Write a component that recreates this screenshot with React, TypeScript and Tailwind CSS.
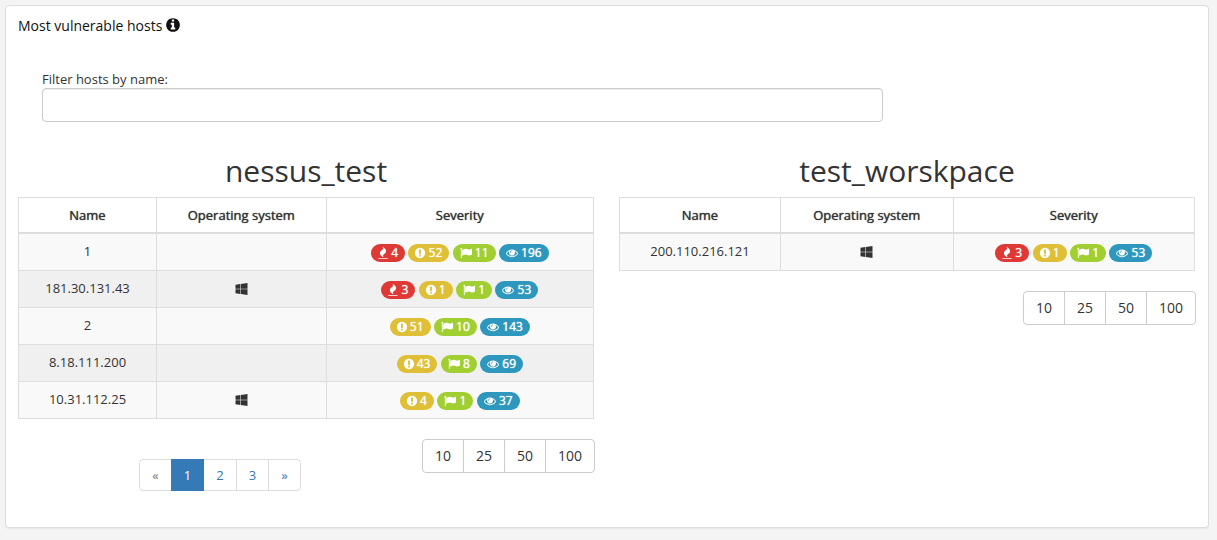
import { useState } from "react";

const ICONS = {
  fire: {
    box: "192 0 1408 1792",
    d: "M1600 1696v64q0 13-9.5 22.5t-22.5 9.5h-1344q-13 0-22.5-9.5t-9.5-22.5v-64q0-13 9.5-22.5t22.5-9.5h1344q13 0 22.5 9.5t9.5 22.5zm-256-1056q0 78-24.5 144t-64 112.5-87.5 88-96 77.5-87.5 72-64 81.5-24.5 96.5q0 96 67 224l-4-1 1 1q-90-41-160-83t-138.5-100-113.5-122.5-72.5-150.5-27.5-184q0-78 24.5-144t64-112.5 87.5-88 96-77.5 87.5-72 64-81.5 24.5-96.5q0-94-66-224l3 1-1-1q90 41 160 83t138.5 100 113.5 122.5 72.5 150.5 27.5 184z",
  },
  alert: {
    box: "160 0 1472 1792",
    d: "M896 128q209 0 385.5 103t279.5 279.5 103 385.5-103 385.5-279.5 279.5-385.5 103-385.5-103-279.5-279.5-103-385.5 103-385.5 279.5-279.5 385.5-103zm128 1247v-190q0-14-9-23.5t-22-9.5h-192q-13 0-23 10t-10 23v190q0 13 10 23t23 10h192q13 0 22-9.5t9-23.5zm-2-344l18-621q0-12-10-18-10-8-24-8h-220q-14 0-24 8-10 6-10 18l17 621q0 10 10 17.5t24 7.5h185q14 0 23.5-7.5t10.5-17.5z",
  },
  flag: {
    box: "0 0 1792 1792",
    d: "M320 256q0 72-64 110v1266q0 13-9.5 22.5t-22.5 9.5h-64q-13 0-22.5-9.5t-9.5-22.5v-1266q-64-38-64-110 0-53 37.5-90.5t90.5-37.5 90.5 37.5 37.5 90.5zm1472 64v763q0 25-12.5 38.5t-39.5 27.5q-215 116-369 116-61 0-123.5-22t-108.5-48-115.5-48-142.5-22q-192 0-464 146-17 9-33 9-26 0-45-19t-19-45v-742q0-32 31-55 21-14 79-43 236-120 421-120 107 0 200 29t219 88q38 19 88 19 54 0 117.5-21t110-47 88-47 54.5-21q26 0 45 19t19 45z",
  },
  eye: {
    box: "0 0 1792 1792",
    d: "M1664 960q-152-236-381-353 61 104 61 225 0 185-131.5 316.5t-316.5 131.5-316.5-131.5-131.5-316.5q0-121 61-225-229 117-381 353 133 205 333.5 326.5t434.5 121.5 434.5-121.5 333.5-326.5zm-720-384q0-20-14-34t-34-14q-125 0-214.5 89.5t-89.5 214.5q0 20 14 34t34 14 34-14 14-34q0-86 61-147t147-61q20 0 34-14t14-34zm848 384q0 34-20 69-140 230-376.5 368.5t-499.5 138.5-499.5-139-376.5-368q-20-35-20-69t20-69q140-229 376.5-368t499.5-139 499.5 139 376.5 368q20 35 20 69z",
  },
  info: {
    box: "128 0 1536 1792",
    d: "M1152 1376v-160q0-14-9-23t-23-9h-96v-512q0-14-9-23t-23-9h-320q-14 0-23 9t-9 23v160q0 14 9 23t23 9h96v320h-96q-14 0-23 9t-9 23v160q0 14 9 23t23 9h448q14 0 23-9t9-23zm-128-896v-160q0-14-9-23t-23-9h-192q-14 0-23 9t-9 23v160q0 14 9 23t23 9h192q14 0 23-9t9-23zm640 416q0 209-103 385.5t-279.5 279.5-385.5 103-385.5-103-279.5-279.5-103-385.5 103-385.5 279.5-279.5 385.5-103 385.5 103 279.5 279.5 103 385.5z",
  },
  windows: {
    box: "64 128 1664 1664",
    d: "M746 1006v651l-682-94v-557h682zm0-743v659h-682v-565zm982 743v786l-907-125v-661h907zm0-878v794h-907v-669z",
  },
};

type IconName = keyof typeof ICONS;

function Icon({ name, className }: { name: IconName; className: string }) {
  return (
    <svg
      viewBox={ICONS[name].box}
      className={`inline-block overflow-visible fill-current ${className}`}
      aria-hidden="true"
    >
      <path d={ICONS[name].d} />
    </svg>
  );
}

const LEVELS: { icon: IconName; color: string; size: string }[] = [
  { icon: "fire", color: "bg-[#df3936]", size: "h-3 w-[10px]" },
  { icon: "alert", color: "bg-[#dfbf35]", size: "h-3 w-[10px]" },
  { icon: "flag", color: "bg-[#a1ce31]", size: "h-3 w-3" },
  { icon: "eye", color: "bg-[#2e97bd]", size: "h-3 w-3" },
];

type Host = { name: string; windows?: boolean; counts: number[] };

function Severity({ counts }: { counts: number[] }) {
  return (
    <>
      {LEVELS.map((level, i) =>
        counts[i] > 0 ? (
          <span key={level.icon}>
            <span
              className={`inline-block h-[18px] rounded-full px-[7px] align-middle text-xs leading-[18px] text-white [text-shadow:0_0_1px_currentColor] ${level.color}`}
            >
              <Icon name={level.icon} className={`align-[-2px] ${level.size}`} /> {counts[i]}
            </span>{" "}
          </span>
        ) : null,
      )}
    </>
  );
}

function HostTable({ hosts, columns }: { hosts: Host[]; columns: string[] }) {
  const cell = "border border-[#ddd] px-2 pt-[7px] pb-2";
  return (
    <table className="w-full table-fixed border-collapse text-center text-[13px] leading-5">
      <thead>
        <tr>
          {["Name", "Operating system", "Severity"].map((title, i) => (
            <th
              key={title}
              className={`border border-b-2 border-[#ddd] px-2 py-[7px] font-normal [text-shadow:0_0_1px_currentColor] ${columns[i]}`}
            >
              {title}
            </th>
          ))}
        </tr>
      </thead>
      <tbody>
        {hosts.map((host) => (
          <tr key={host.name} className="h-[37px] odd:bg-[#f9f9f9] even:bg-[#f0f0f0]">
            <td className={cell}>{host.name}</td>
            <td className={cell}>
              {host.windows && <Icon name="windows" className="h-3 w-[13px] align-[-2px]" />}
            </td>
            <td className="border border-[#ddd] px-2">
              <Severity counts={host.counts} />
            </td>
          </tr>
        ))}
      </tbody>
    </table>
  );
}

function PageSizes() {
  return (
    <div className="-mr-px flex h-[34px] rounded border border-[#ccc] bg-white text-sm leading-5">
      {[10, 25, 50, 100].map((n) => (
        <button key={n} type="button" className="border-l border-[#ccc] px-3 first:border-l-0">
          {n}
        </button>
      ))}
    </div>
  );
}

function Pagination() {
  const link = "-ml-px border border-[#ddd] px-3 py-[6px] text-[#337ab7]";
  return (
    <nav aria-label="Pages" className="mt-5 flex text-[13px] leading-[18px]">
      <a href="#prev" className="rounded-l border border-[#ddd] px-3 py-[6px] text-[#777]">«</a>
      <a href="#1" className="relative -ml-px border border-[#337ab7] bg-[#337ab7] px-3 py-[6px] text-white">1</a>
      <a href="#2" className={link}>2</a>
      <a href="#3" className={link}>3</a>
      <a href="#next" className={`${link} rounded-r`}>»</a>
    </nav>
  );
}

const NESSUS: Host[] = [
  { name: "1", counts: [4, 52, 11, 196] },
  { name: "181.30.131.43", windows: true, counts: [3, 1, 1, 53] },
  { name: "2", counts: [0, 51, 10, 143] },
  { name: "8.18.111.200", counts: [0, 43, 8, 69] },
  { name: "10.31.112.25", windows: true, counts: [0, 4, 1, 37] },
];

const WORKSPACE: Host[] = [{ name: "200.110.216.121", windows: true, counts: [3, 1, 1, 53] }];

export default function App() {
  const [filter, setFilter] = useState("");
  return (
    <div className="min-h-screen bg-[#f4f4f4] pt-[5px] pr-2 pb-3 pl-[5px] font-['Open_Sans',sans-serif] text-[#333]">
      <section className="rounded border border-[#ddd] bg-white px-3 pt-[10px] pb-9 shadow-[0_1px_1px_rgba(0,0,0,0.05)]">
        <h2 className="text-sm leading-5 text-[#111]">
          Most vulnerable hosts <Icon name="info" className="h-4 w-[14px] align-[-2px]" />
        </h2>

        <div className="mt-[34px] px-6">
          <label htmlFor="filter" className="block text-[13px] leading-[18px]">
            Filter hosts by name:
          </label>
          <input
            id="filter"
            type="text"
            value={filter}
            onChange={(e) => setFilter(e.target.value)}
            className="block h-[34px] w-[74.4%] rounded border border-[#ccc] bg-white px-3 text-sm shadow-[inset_0_1px_1px_rgba(0,0,0,0.075)]"
          />
        </div>

        <div className="mt-8 grid grid-cols-2 gap-x-[25px] pr-px">
          <div>
            <h3 className="mb-[10px] text-center text-[30px] leading-[33px]">nessus_test</h3>
            <HostTable hosts={NESSUS} columns={["w-[24%]", "w-[29.5%]", "w-[46.5%]"]} />
            <div className="mt-5 flex items-start">
              <div className="flex flex-1 justify-center">
                <Pagination />
              </div>
              <PageSizes />
            </div>
          </div>
          <div>
            <h3 className="mb-[10px] text-center text-[30px] leading-[33px]">test_worskpace</h3>
            <HostTable hosts={WORKSPACE} columns={["w-[28%]", "w-[30%]", "w-[42%]"]} />
            <div className="mt-5 flex justify-end">
              <PageSizes />
            </div>
          </div>
        </div>
      </section>
    </div>
  );
}
